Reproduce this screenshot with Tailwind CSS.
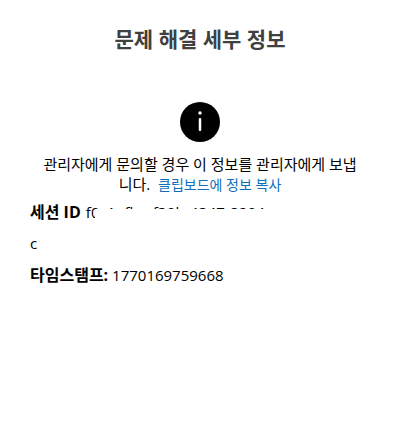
<!DOCTYPE html>
<html lang="ko">
<head>
    <meta charset="UTF-8">
    <meta name="viewport" content="width=device-width, initial-scale=1.0">
    <title>문제 해결 세부 정보</title>
    <script src="https://cdn.jsdelivr.net/npm/@tailwindcss/browser@4"></script>
</head>
<body class="bg-white text-black font-['Open_Sans','Noto_Sans_CJK_KR',sans-serif]">
    <div class="w-[370px] h-[439px] overflow-hidden pl-[30px] pt-[25px]">
        <h1 class="text-center text-[21px] leading-[28px] font-bold text-[#404040]">문제 해결 세부 정보</h1>

        <div class="flex justify-center mt-[49px]">
            <svg class="w-10 h-10" viewBox="0 0 40 40">
                <circle cx="20" cy="20" r="20" fill="#000"/>
                <circle cx="20" cy="11" r="1.7" fill="#fff"/>
                <rect x="18.75" y="16" width="2.5" height="13" rx="1" fill="#fff"/>
            </svg>
        </div>

        <p class="w-[320px] mx-auto mt-[12px] text-center text-[15px] leading-[20px]">관리자에게 문의할 경우 이 정보를 관리자에게 보냅니다.&nbsp; <a class="text-[14px] text-[#106ebe]">클립보드에 정보 복사</a></p>

        <div class="relative mt-[2px] text-[15px] leading-[31px]">
            <p><span class="font-bold text-[16px]">세션 ID</span>&nbsp;<span class="ml-px tracking-[0.2px]">f0c1afbe-f39b-4347-8294</span><br>c</p>
            <div class="absolute left-[65px] top-[12px] w-[240px] h-[14px] bg-white"></div>
        </div>

        <p class="mt-[1px] text-[15px] leading-[31px]"><span class="font-bold text-[16px]">타임스탬프:</span> 1770169759668</p>
    </div>
</body>
</html>
